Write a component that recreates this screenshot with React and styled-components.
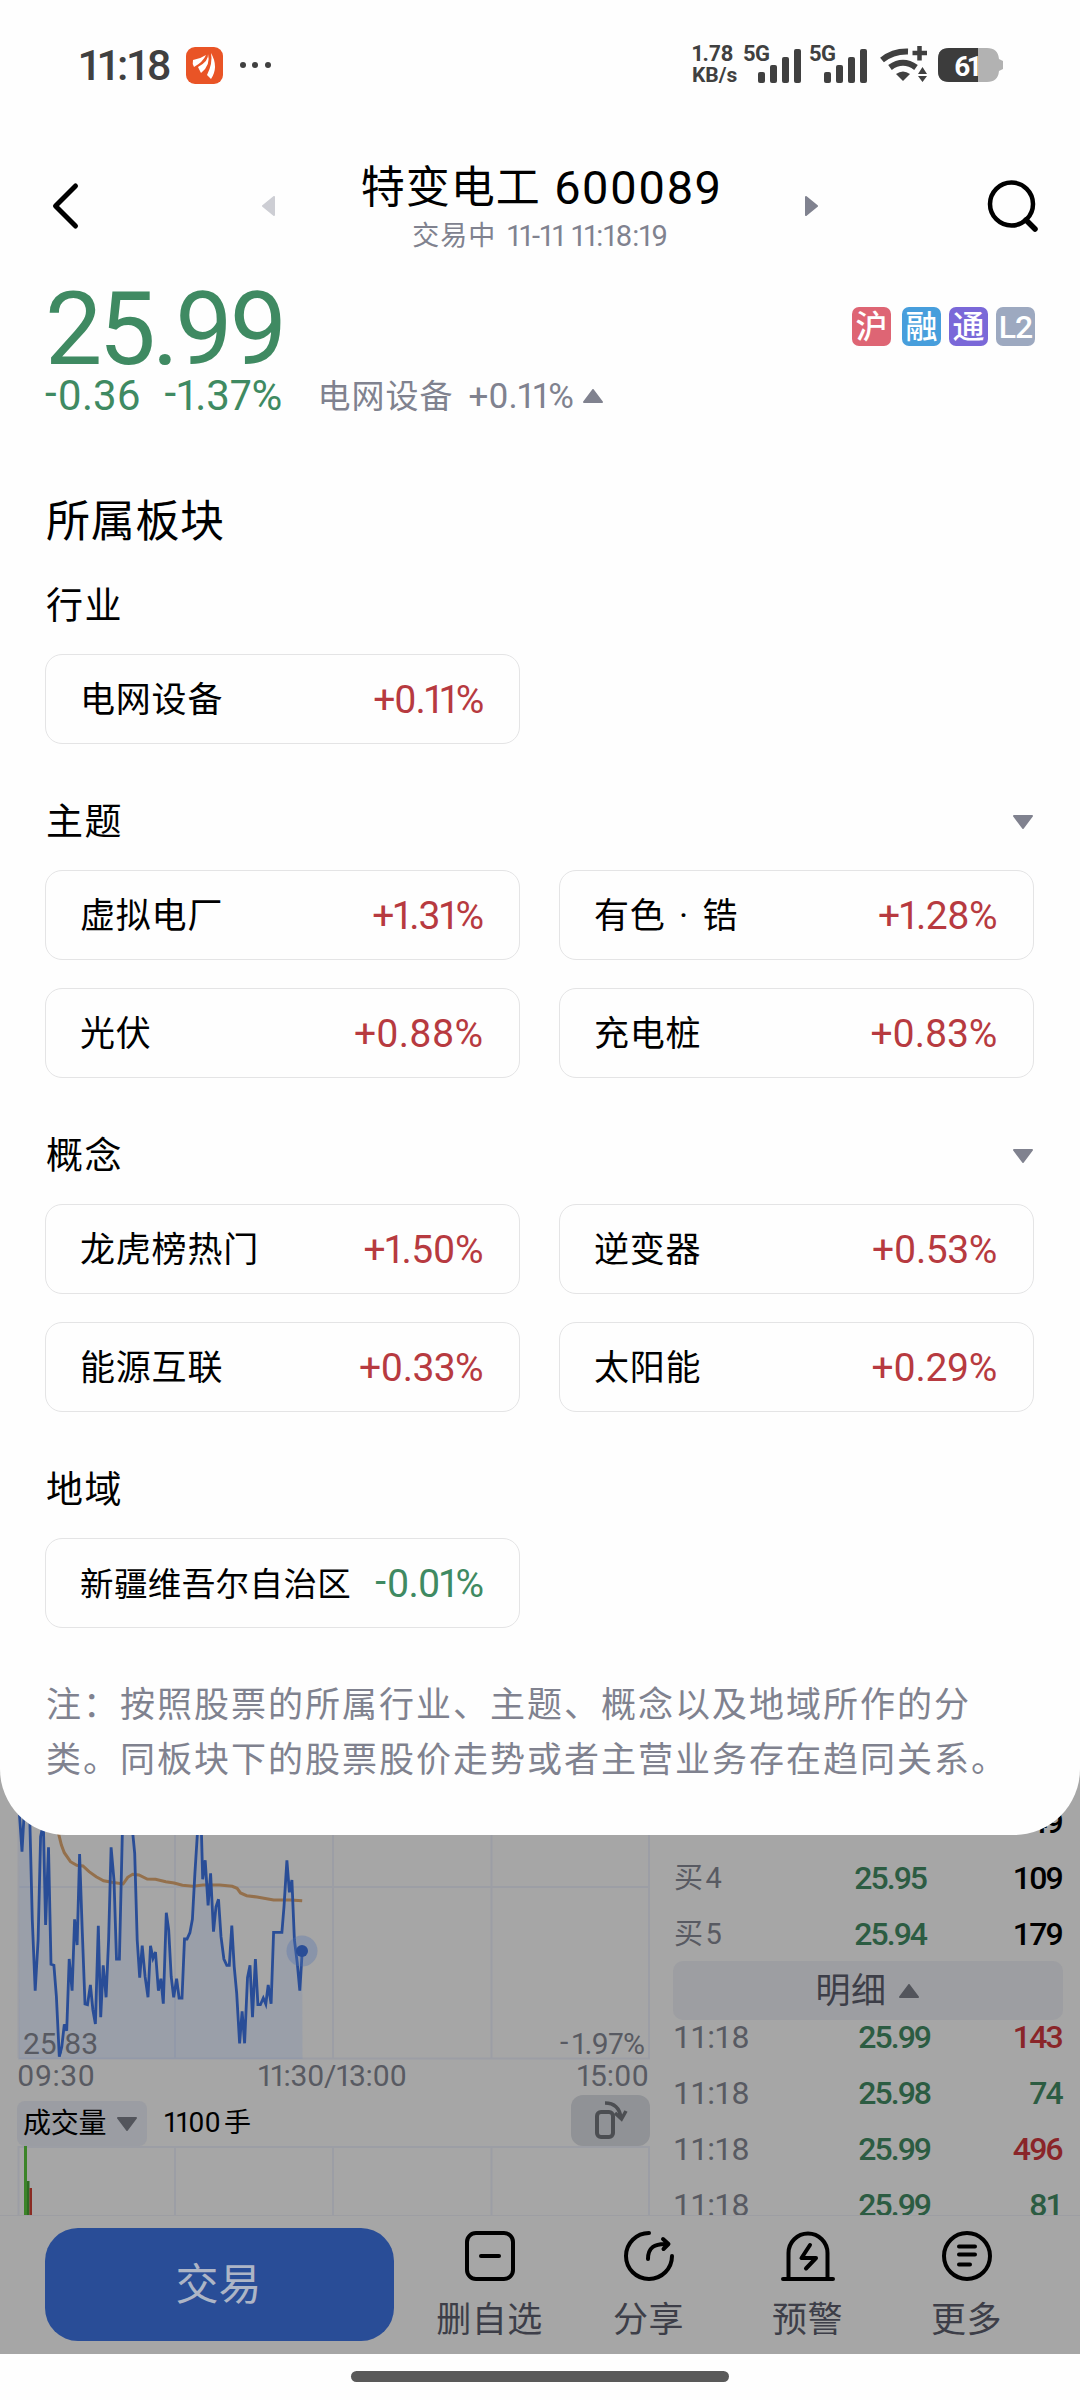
import React from 'react';
import styled, { createGlobalStyle } from 'styled-components';

const RED = '#b73a40';
const GREEN = '#3f8a62';
const GREY = '#80828f';

const GlobalStyle = createGlobalStyle`
    body {
        margin: 0;
        background: #fff;
        font-family: Roboto, 'Noto Sans CJK SC', sans-serif;
        font-variant-numeric: proportional-nums;
        color: #000;
    }
    * { box-sizing: border-box; }
    svg { display: block; flex: none; }
`;

const Page = styled.div`
    width: 1080px;
    height: 2400px;
    display: flex;
    flex-direction: column;
    overflow: hidden;
    background: #fefefe;
`;

const Sheet = styled.div`
    flex: none;
    height: 1835px;
    background: #fefefe;
    border-radius: 0 0 66px 66px;
    position: relative;
    z-index: 1;
`;

const Text = styled.span`
    font-size: ${p => p.$size}px;
    line-height: ${p => p.$line || p.$size}px;
    letter-spacing: ${p => p.$ls || 0}px;
    color: ${p => p.$color || 'inherit'};
    font-weight: ${p => p.$weight || 400};
    white-space: nowrap;
`;

// short minus, raised to the middle of the digits
const Minus = styled.span`
    line-height: 0;
    vertical-align: 0.075em;
    letter-spacing: 0.02em;
`;

/* status bar */

const StatusBar = styled.div`
    height: 130px;
    padding: 0 77px 0 79px;
    display: flex;
    align-items: center;
    justify-content: space-between;
    color: #404040;
`;

const StatusSide = styled.div`
    display: flex;
    align-items: center;
    height: 40px;
`;

const AppBadge = styled.div`
    width: 37px;
    height: 37px;
    margin: 0 16px 0 15px;
    border-radius: 9px;
    background: #e95426;
`;

const Speed = styled.div`
    width: 51px;
    height: 40px;
    display: flex;
    flex-direction: column;
    justify-content: space-between;
`;

const Signal = styled.div`
    width: 66px;
    height: 40px;
    display: flex;
    align-items: flex-start;
`;

const Bars = styled.div`
    display: flex;
    align-items: flex-end;
    gap: 5px;
    height: 34px;
    margin: 4px 0 0 -12px;
`;

const Bar = styled.i`
    width: 7px;
    height: ${p => p.$h}px;
    border-radius: 2px;
    background: #404040;
`;

const StatusIcons = styled.svg`
    margin-left: 4px;
`;

/* title bar */

const TitleBar = styled.div`
    height: 140px;
    padding: 11px 42px 0 50px;
    display: flex;
    align-items: center;
    justify-content: space-between;
`;

const TitleGroup = styled.div`
    display: flex;
    align-items: center;
    justify-content: space-between;
    width: 556px;
    margin-left: 12px;
`;

const Title = styled.div`
    display: flex;
    flex-direction: column;
    align-items: center;
    gap: 6px;
    height: 92px;
    padding-left: 3px;
`;

const TitleLine = styled.div`
    display: flex;
    align-items: center;
    gap: 13px;
    height: 58px;
`;

const SubLine = styled.div`
    display: flex;
    align-items: center;
    gap: 11px;
    height: 30px;
    padding-right: 3px;
`;

/* quote */

const Quote = styled.div`
    height: 230px;
    padding: 15px 45px 0 45px;
    display: flex;
    justify-content: space-between;
`;

const QuoteRow = styled.div`
    display: flex;
    align-items: center;
    height: 46px;
`;

const Change = styled.div`
    display: flex;
    gap: 24px;
    margin-right: 35px;
`;

const Industry = styled.div`
    display: flex;
    align-items: center;
    gap: 15px;
    margin-right: 9px;
`;

const Tags = styled.div`
    display: flex;
    padding-top: 22px;
`;

const Tag = styled.div`
    width: 39px;
    height: 39px;
    margin-left: ${p => p.$gap || 8}px;
    border-radius: 7px;
    background: ${p => p.$bg};
    color: #fff;
    display: flex;
    align-items: center;
    justify-content: center;
`;

/* sections */

const Content = styled.div`
    padding: 0 46px 0 45px;
`;

const Heading = styled.div`
    height: 70px;
    padding-left: 1px;
    display: flex;
    align-items: flex-start;
    margin-top: -6px;
`;

const Section = styled.div`
    margin-bottom: 36px;
`;

const SectionHead = styled.div`
    height: 90px;
    display: flex;
    align-items: center;
    justify-content: space-between;
    padding: 0 1px 6px 1px;
`;

const Grid = styled.div`
    display: grid;
    grid-template-columns: 475px 475px;
    column-gap: 39px;
    row-gap: 28px;
`;

const Card = styled.div`
    height: 90px;
    border: 1px solid #e4e4e5;
    border-radius: 17px;
    padding: 2px 36px 0 34px;
    display: flex;
    align-items: center;
    justify-content: space-between;
    word-spacing: 4px;
`;

const CardName = styled(Text)`
    padding-top: 2px;
`;

const Note = styled.div`
    font-size: 35px;
    line-height: 55px;
    letter-spacing: 2px;
    color: ${GREY};
    white-space: nowrap;
    padding-left: 1px;
    margin-top: 50px;
`;

/* dimmed page under the sheet */

const Dimmed = styled.div`
    flex: none;
    height: 585px;
    margin-top: -66px;
    background: #a6a6a6;
`;

const Market = styled.div`
    display: flex;
    height: 447px;
    overflow: hidden;
    border-bottom: 1px solid #9d9ea3;
`;

const ChartColumn = styled.div`
    width: 673px;
    flex: none;
`;

const VolumeHead = styled.div`
    display: flex;
    align-items: center;
    height: 52px;
    padding-left: 17px;
    width: 650px;
`;

const IndexPicker = styled.div`
    width: 130px;
    height: 45px;
    margin: 6px 17px 0 0;
    padding: 2px 10px 0 6px;
    border-radius: 8px;
    background: #9b9da3;
    display: flex;
    align-items: center;
    justify-content: space-between;
`;

const Volume = styled.div`
    display: flex;
    gap: 3px;
    padding-top: 6px;
`;

const RotateButton = styled.div`
    width: 79px;
    height: 51px;
    margin-left: auto;
    border-radius: 12px;
    background: #909296;
    display: flex;
    align-items: center;
    justify-content: center;
`;

const Book = styled.div`
    width: 390px;
    padding-top: 25px;
    font-variant-numeric: tabular-nums;
`;

const BookRow = styled.div`
    display: grid;
    grid-template-columns: 150px 1fr 80px;
    align-items: center;
    height: 56px;
    padding: 0 1px 0 ${p => p.$pad}px;
    span:nth-child(2) { text-align: right; padding-right: ${p => p.$shift}px; }
    span:nth-child(3) { text-align: right; }
`;

const DetailBar = styled.div`
    height: 59px;
    border-radius: 10px;
    background: #9d9ea2;
    display: flex;
    align-items: center;
    justify-content: center;
    gap: 12px;
    margin: -1px 0 -11px;
    padding: 1px 2px 0 0;
`;

const Toolbar = styled.div`
    height: 138px;
    padding: 12px 0 0 45px;
    display: flex;
`;

const TradeButton = styled.div`
    width: 349px;
    height: 113px;
    margin-right: 16px;
    padding: 2px 2px 0 0;
    border-radius: 33px;
    background: #294d97;
    display: flex;
    align-items: center;
    justify-content: center;
`;

const Tool = styled.div`
    width: 159px;
    display: flex;
    flex-direction: column;
    align-items: center;
    gap: 19px;
    padding-top: 2px;
`;

const HomeBar = styled.div`
    width: 378px;
    height: 11px;
    margin: 17px auto 0;
    border-radius: 6px;
    background: #595959;
`;

const Triangle = ({ dir = 'up', w = 20, h = 14, color = GREY }) => {
    const points = {
        up: `1,${h - 1} ${w / 2},1 ${w - 1},${h - 1}`,
        down: `1,1 ${w - 1},1 ${w / 2},${h - 1}`,
        left: `${w - 1},1 ${w - 1},${h - 1} 1,${h / 2}`,
        right: `1,1 ${w - 1},${h / 2} 1,${h - 1}`,
    }[dir];
    return (
        <svg width={w} height={h}>
            <polygon points={points} fill={color} stroke={color} strokeWidth="2" strokeLinejoin="round" />
        </svg>
    );
};

const Signed = ({ value, ...rest }) => (
    <Text {...rest}>
        {value[0] === '-' ? <><Minus>-</Minus>{value.slice(1)}</> : value}
    </Text>
);

const SignalBars = () => (
    <Signal>
        <Text $size={22} $line={18} $weight={700} $ls={-0.5}>5G</Text>
        <Bars>
            <Bar $h={11} />
            <Bar $h={18} />
            <Bar $h={26} />
            <Bar $h={34} />
        </Bars>
    </Signal>
);

// name, change, letter spacing of the change
const sections = [
    { title: '行业', items: [['电网设备', '+0.11%', -1.3]] },
    {
        title: '主题',
        more: true,
        items: [
            ['虚拟电厂', '+1.31%', -1],
            ['有色 · 锆', '+1.28%', -0.6],
            ['光伏', '+0.88%', 0],
            ['充电桩', '+0.83%', -0.3],
        ],
    },
    {
        title: '概念',
        more: true,
        items: [
            ['龙虎榜热门', '+1.50%', -0.5],
            ['逆变器', '+0.53%', -0.4],
            ['能源互联', '+0.33%', -0.6],
            ['太阳能', '+0.29%', -0.4],
        ],
    },
    { title: '地域', items: [['新疆维吾尔自治区', '-0.01%', -1]] },
];

const bids = [
    ['买3', '25.96', '149'],
    ['买4', '25.95', '109'],
    ['买5', '25.94', '179'],
];

const trades = [
    ['11:18', '25.99', '143', '#8a2529'],
    ['11:18', '25.98', '74', '#2c5c42'],
    ['11:18', '25.99', '496', '#8a2529'],
    ['11:18', '25.99', '81', '#2c5c42'],
];

// minute line and average line, in chart units
const price = '47,105 53,215 60,60 66,60 72,130 78,420 85,632 92,480 98,170 103,140 105,150 110,435 117,202 123,553 130,556 136,650 143,830 149,800 155,733 161,752 167,537 174,632 180,418 186,495 192,222 198,440 205,672 211,674 218,615 224,690 230,732 237,437 243,712 249,556 256,652 262,480 268,202 275,300 281,537 288,537 295,165 300,100 318,130 325,220 331,480 337,593 343,497 350,590 357,652 363,497 369,535 375,516 382,632 388,596 394,671 401,398 407,450 413,590 419,652 426,596 432,654 439,654 445,477 451,477 458,458 464,418 470,280 476,165 480,120 486,165 489,298 495,241 502,376 508,280 515,455 521,380 527,358 533,470 540,537 547,556 553,556 559,437 565,560 571,640 578,790 584,694 590,790 597,593 603,556 609,712 616,537 622,674 628,674 635,654 641,672 647,615 654,671 660,457 680,457 685,380 692,241 698,337 704,300 710,480 717,550 723,632 729,515';
const average = '140,140 142,165 148,195 155,218 170,245 185,256 200,258 215,275 232,290 250,302 270,307 297,312 308,292 320,283 335,285 355,297 375,298 400,305 420,309 440,316 465,319 490,315 530,315 560,319 572,325 580,339 595,347 620,351 660,360 700,360 729,362';

const toPixels = list => list.split(' ').map(pair => {
    const [x, y] = pair.split(',').map(Number);
    return `${(x / 2.412).toFixed(1)},${(y / 3 + 11).toFixed(1)}`;
}).join(' ');

const columns = [18.5, 175, 333, 491.5, 649];

const PriceChart = () => (
    <svg width="673" height="325">
        <g stroke="#9c9ea5" strokeWidth="2">
            {columns.map(x => <path key={x} d={`M${x} 0V289`} />)}
            <path d="M18 118H650M18 289.500H650" />
        </g>
        <polygon points={`19,290 ${toPixels(price)} 302.500,290`} fill="#6d86b8" fillOpacity=".2" />
        <polyline points={toPixels(average)} fill="none" stroke="#94704c" strokeWidth="3" />
        <g fill="#585a62" fontSize="30">
            <text x="23" y="285" textLength="75">25.83</text>
            <text x="560" y="283" textLength="11">-</text>
            <text x="572" y="285" textLength="73">1.97%</text>
            <text x="17" y="317" textLength="78">09:30</text>
            <text x="258" y="317" textLength="149">11:30/13:00</text>
            <text x="577" y="317" textLength="72">15:00</text>
        </g>
        <polyline points={toPixels(price)} fill="none" stroke="#294d97" strokeWidth="2.800" />
        <circle cx="302" cy="182" r="15.500" fill="#5474b0" fillOpacity=".35" />
        <circle cx="302" cy="182" r="6" fill="#294d97" />
    </svg>
);

const VolumeChart = () => (
    <svg width="673" height="72">
        <g stroke="#9c9ea5" strokeWidth="2">
            {columns.map(x => <path key={x} d={`M${x} 0V72`} />)}
            <path d="M18 1H650" />
        </g>
        <path d="M24 0h3v72h-3z" fill="#3c8428" />
        <path d="M27 35h2.500v37h-2.500z" fill="#2f6b22" />
        <path d="M29.500 42h2.500v30h-2.500z" fill="#8a2b22" />
    </svg>
);

const ToolIcon = ({ children }) => (
    <svg width="56" height="52" viewBox="-28 -26 56 52" fill="none" stroke="#000" strokeWidth="4" strokeLinecap="round" strokeLinejoin="round">
        {children}
    </svg>
);

const App = () => (
    <>
        <GlobalStyle />
        <Page>
            <Sheet>
                <StatusBar>
                    <StatusSide>
                        <Text $size={43} $line={44} $weight={500} $ls={-0.8}>11:18</Text>
                        <AppBadge>
                            <svg width="37" height="37" fill="#fff">
                                <path d="M7 13Q14 12 20 8Q17 15 8 20Q6 17 7 13Z" />
                                <path d="M22 7Q23 14 12 20L15 26Q25 18 22 7Z" />
                                <path d="M25 6Q27 16 21 28L25 32Q33 20 25 6Z" />
                            </svg>
                        </AppBadge>
                        <svg width="34" height="8" fill="#404040">
                            <circle cx="4" cy="4" r="3" />
                            <circle cx="16" cy="4" r="3" />
                            <circle cx="29" cy="4" r="3" />
                        </svg>
                    </StatusSide>
                    <StatusSide>
                        <Speed>
                            <Text $size={22} $line={18} $weight={700}>1.78</Text>
                            <Text $size={21} $line={19} $weight={700}>KB/s</Text>
                        </Speed>
                        <SignalBars />
                        <SignalBars />
                        <StatusIcons width="124" height="40" viewBox="878 45 124 40">
                            <g fill="none" stroke="#404040" strokeWidth="6">
                                <path d="M881 60Q892 51 907 51.500" />
                                <path d="M889 67.500Q902 58 915 67.500" />
                                <path d="M918.500 46V60.500M911.500 53H926" strokeWidth="4.500" />
                            </g>
                            <path d="M895 74Q902 69 909 74L902 81Z" fill="#404040" />
                            <path d="M921.500 67L926 74H917ZM921.500 82L926 76H917Z" fill="#404040" />
                            <path d="M948 48H986Q997 48 998 59L1002 61V69L998 71Q997 82 986 82H948Q937 82 937 71V59Q937 48 948 48Z" fill="#b2b2b2" />
                            <path d="M948 48H977V82H948Q937 82 937 71V59Q937 48 948 48Z" fill="#3c3c3c" />
                            <text x="953" y="75.500" fontSize="28" fontWeight="700" textLength="27" fill="#fff">61</text>
                        </StatusIcons>
                    </StatusSide>
                </StatusBar>

                <TitleBar>
                    <svg width="32" height="50" fill="none" stroke="#000" strokeWidth="5" strokeLinecap="round">
                        <path d="M25.500 5L5.500 25L25.500 45" strokeLinejoin="round" />
                    </svg>
                    <TitleGroup>
                        <Triangle dir="left" w={13} h={20} color="#cdced4" />
                        <Title>
                            <TitleLine>
                                <Text $size={44} $ls={1} $line={56}>特变电工</Text>
                                <Text $size={47} $ls={0.9} $line={56}>600089</Text>
                            </TitleLine>
                            <SubLine>
                                <Text $size={27} $ls={1} $color={GREY}>交易中</Text>
                                <Text $size={29} $ls={-0.2} $color={GREY}>11-11 11:18:19</Text>
                            </SubLine>
                        </Title>
                        <Triangle dir="right" w={13} h={20} />
                    </TitleGroup>
                    <svg width="52" height="54" fill="none" stroke="#000" strokeWidth="4.500" strokeLinecap="round">
                        <circle cx="25.500" cy="25" r="21.500" />
                        <path d="M40 41L49 50" strokeWidth="5.500" />
                    </svg>
                </TitleBar>

                <Quote>
                    <div>
                        <Text as="div" $size={102} $line={88} $ls={-3.8} $color={GREEN}>25.99</Text>
                        <QuoteRow>
                            <Change>
                                <Signed $size={42} $color={GREEN} value="-0.36" />
                                <Signed $size={42} $color={GREEN} value="-1.37%" />
                            </Change>
                            <Industry>
                                <Text $size={33} $ls={1} $color={GREY}>电网设备</Text>
                                <Text $size={35} $color={GREY}>+0.11%</Text>
                            </Industry>
                            <Triangle />
                        </QuoteRow>
                    </div>
                    <Tags>
                        <Tag $bg="#de6574"><Text $size={32} $weight={500}>沪</Text></Tag>
                        <Tag $bg="#479edc" $gap={11}><Text $size={32} $weight={500}>融</Text></Tag>
                        <Tag $bg="#7a68d8"><Text $size={32} $weight={500}>通</Text></Tag>
                        <Tag $bg="#9da9c0"><Text $size={32} $weight={500} $ls={-1}>L2</Text></Tag>
                    </Tags>
                </Quote>

                <Content>
                    <Heading><Text $size={44} $ls={0.7} $line={56}>所属板块</Text></Heading>
                    {sections.map(({ title, more, items }) => (
                        <Section key={title}>
                            <SectionHead>
                                <Text $size={37} $ls={1.5}>{title}</Text>
                                {more && <Triangle dir="down" />}
                            </SectionHead>
                            <Grid>
                                {items.map(([name, value, ls]) => (
                                    <Card key={name}>
                                        <CardName $size={name.length > 7 ? 33.5 : 35} $ls={name.length > 7 ? 0.4 : 0.8} $line={50}>{name}</CardName>
                                        <Signed $size={39} $ls={ls} $line={50} $color={value[0] === '+' ? RED : GREEN} value={value} />
                                    </Card>
                                ))}
                            </Grid>
                        </Section>
                    ))}
                    <Note>
                        注：按照股票的所属行业、主题、概念以及地域所作的分<br />
                        类。同板块下的股票股价走势或者主营业务存在趋同关系。
                    </Note>
                </Content>
            </Sheet>

            <Dimmed>
                <Market>
                    <ChartColumn>
                        <PriceChart />
                        <VolumeHead>
                            <IndexPicker>
                                <Text $size={28} $ls={-0.3}>成交量</Text>
                                <Triangle dir="down" h={14} color="#53555c" />
                            </IndexPicker>
                            <Volume>
                                <Text $size={28}>1100</Text>
                                <Text $size={27} $line={28}>手</Text>
                            </Volume>
                            <RotateButton>
                                <svg width="34" height="40" fill="none" stroke="#4c4e52" strokeWidth="4">
                                    <rect x="3" y="12" width="16" height="25" rx="4" />
                                    <path d="M11 3Q25 3 27 18M21 13L27.500 19L32 11" strokeWidth="3.500" />
                                </svg>
                            </RotateButton>
                        </VolumeHead>
                        <VolumeChart />
                    </ChartColumn>
                    <Book>
                        {bids.map(([label, value, count]) => (
                            <BookRow key={label} $pad={1} $shift={56}>
                                <Text $size={29} $ls={2.5} $color="#585a62">{label}</Text>
                                <Text $size={32} $ls={-2} $weight={500} $color="#2c5c42">{value}</Text>
                                <Text $size={32} $ls={-1.8} $weight={500}>{count}</Text>
                            </BookRow>
                        ))}
                        <DetailBar>
                            <Text $size={35} $ls={0.5} $color="#3d3e48">明细</Text>
                            <Triangle color="#53555c" />
                        </DetailBar>
                        {trades.map(([time, value, count, color], i) => (
                            <BookRow key={i} $pad={0} $shift={52}>
                                <Text $size={32} $ls={-0.8} $color="#585a62">{time}</Text>
                                <Text $size={32} $ls={-2} $weight={500} $color="#2c5c42">{value}</Text>
                                <Text $size={32} $ls={-1.8} $weight={500} $color={color}>{count}</Text>
                            </BookRow>
                        ))}
                    </Book>
                </Market>
                <Toolbar>
                    <TradeButton><Text $size={43} $color="#adb5c6">交易</Text></TradeButton>
                    <Tool>
                        <ToolIcon>
                            <rect x="-23" y="-23" width="46" height="46" rx="9" />
                            <path d="M-9 0H9" />
                        </ToolIcon>
                        <Text $size={35} $ls={0.5} $line={40} $color="#3d3e48">删自选</Text>
                    </Tool>
                    <Tool>
                        <ToolIcon>
                            <path d="M0 -23A23 23 0 1 0 23 0M-1 3C-1 -8 5 -13 19 -12M14 -17L19.500 -12L14.500 -7" />
                        </ToolIcon>
                        <Text $size={35} $ls={0.5} $line={40} $color="#3d3e48">分享</Text>
                    </Tool>
                    <Tool>
                        <ToolIcon>
                            <path d="M-25 23H25M-19.500 22V-3A19.500 19.500 0 0 1 19.500 -3V22M2 -11L-6.500 2H8L-2 12.500" />
                        </ToolIcon>
                        <Text $size={35} $ls={0.5} $line={40} $color="#3d3e48">预警</Text>
                    </Tool>
                    <Tool>
                        <ToolIcon>
                            <circle r="23" />
                            <path d="M-8 -9.500H8M-8 -1.500H8M-8 8.500H3" />
                        </ToolIcon>
                        <Text $size={35} $ls={0.5} $line={40} $color="#3d3e48">更多</Text>
                    </Tool>
                </Toolbar>
            </Dimmed>
            <HomeBar />
        </Page>
    </>
);

export default App;
